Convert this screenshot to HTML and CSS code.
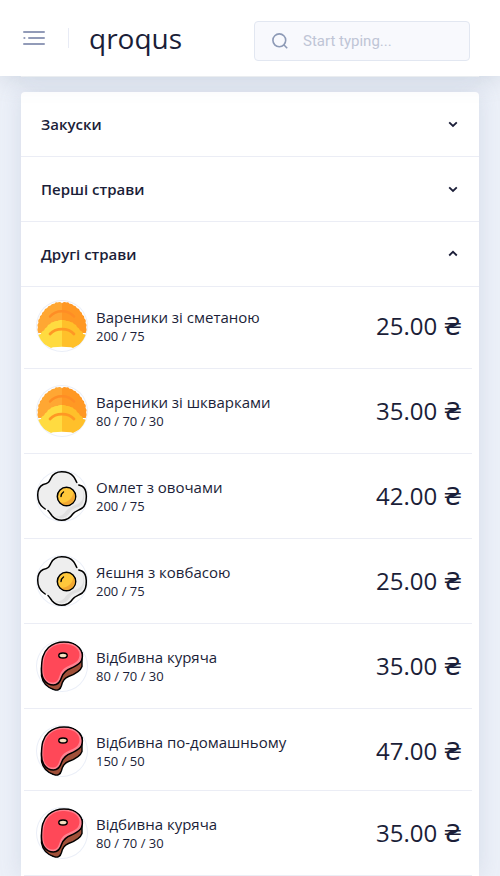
FILE: index.html
```
<!DOCTYPE html>
<html lang="uk">
<head>
<meta charset="utf-8">
<title>qroqus</title>
<link rel="stylesheet" href="styles.css">
</head>
<body>
<svg class="sprite" aria-hidden="true">
  <defs>
    <clipPath id="round"><circle cx="26" cy="26" r="25.300"/></clipPath>
  </defs>
  <symbol id="dumpling" viewBox="0 0 52 52">
    <g clip-path="url(#round)">
      <path fill="#ffa733" d="M26 3.200q-2-2-4.500-.8-2-.4-3 1.400-2.800-.4-4 1.700-2.700.3-3.300 2.600Q8.400 8.500 8 11.200q-2.500 1-2.300 3.600Q3.200 16 3.700 18.600 1.500 20 2.500 22.700.7 24.700 1.900 27.300.7 29.500 2.300 33H26z"/>
      <path fill="#ff9824" d="M26 3.200q2-2 4.500-.8 2-.4 3 1.400 2.800-.4 4 1.700 2.700.3 3.300 2.600 2.800.4 3.200 3.100 2.500 1 2.300 3.600 2.500 1.200 2 3.800 2.200 1.400 1.200 4.100 1.800 2 .6 4.600 1.200 2.200-.4 5.700H26z"/>
      <path fill="#ffdb40" d="M26 20q-3-.5-4.500 1-2.500-.5-4 1-2.500 0-3.500 2-2.500.5-3 3-2.500 1-3 3.500Q5 31.500 5 34q-3 0-3 2 2 7 13 12l2-.8 9-.5z"/>
      <path fill="#ffc02a" d="M26 20q3-.5 4.500 1 2.500-.5 4 1 2.500 0 3.500 2 2.500.5 3 3 2.500 1 3 3.500 3 1 3 3.500 3 0 3 2-2 7-13 12l-2-.8-9-.5z"/>
    </g>
    <path fill="none" stroke="#ff8d25" stroke-width="2.500" stroke-linecap="round" d="M14 16.500c6-7 18-7 24 0"/>
    <path fill="none" stroke="#ff9824" stroke-width="2.700" stroke-linecap="round" d="M14 34c6-6.500 18-6.500 24 0"/>
  </symbol>
  <symbol id="egg" viewBox="0 0 52 52">
    <path fill="#eee" d="M25.700 1.800C31 1.800 35 3.500 37.500 6.500c2 3 2.500 6.500 5.500 8.500 5 1.500 6.800 4 7.300 10.500.2 6-1 10-4 12.500-4 2.500-7 3-9.500 6-3 4.500-6 6.300-11.100 6.300-4 0-7-1.500-10-4.300-2-2.500-3-5-6.500-7.500C4 35 1.700 30 1.700 25c0-6 1.500-8.500 5.500-10.500C12.500 13.500 13 12 15 8c2-4 5-6.200 10.700-6.200z"/>
    <path fill="#dfdfdf" d="M46.500 18c2 8 1 13-5 16-8 3-10 5-13 9-3 3-6 4-9 3 5 4 11 2 14-3 2-4 5-5 9-6 6-2 7-13 4-19z"/>
    <path fill="none" stroke="#000" stroke-width="1.500" stroke-linecap="round" stroke-linejoin="round" d="M12 40.500c2 2 3 4 4.200 5.500 2.500 2.800 5.500 4.300 9.500 4.300 5.100 0 8.100-1.800 11.100-6.300 2.500-3 5.500-3.500 9.500-6 3-2.500 4.200-6.500 4-12.500-.2-5-1.500-8-4.500-9.500l-3-1M40.800 12.500C39.500 10 39 8.300 37.500 6.500 35 3.500 31 1.800 25.700 1.800 20 1.800 17 4 15 8c-2 4-2.500 5.500-7.800 6.500-4 2-5.500 4.500-5.500 10.500 0 5 2.300 10 5.500 12.500l2 1.500"/>
    <circle cx="30.500" cy="26.500" r="9.200" fill="#ffc83b" stroke="#000" stroke-width="1.500"/>
    <path fill="#f2a832" d="M37.500 22a8.400 8.400 0 0 1-13 10.500c7 1 12-4 13-10.500z"/>
    <path fill="none" stroke="#000" stroke-width="1.400" stroke-linecap="round" d="M25 26.500c0-2 1-3.500 2.500-4.500"/>
  </symbol>
  <symbol id="steak" viewBox="0 0 52 52">
    <path fill="#a05039" stroke="#000" stroke-width="1.400" d="M5.500 28v8c1 6 5 11 12 13.500 4 1.500 7 0 8-4 1-4.500 3-7.500 7-9 7-2.500 12-5.500 13.500-10V13z"/>
    <path fill="#ff8290" stroke="#000" stroke-width="1.500" d="M5.500 30c0-10 1-17 7-22.500C17 3.500 22 2 28 2c7 0 12 2 15 5.500 3.500 4 4 9 2.500 13-1.500 4-6 5.500-10 7.500-5.500 2-8.500 5-10 9.500-1.500 5-4 7.500-8 7.500C9.500 45 5.500 38 5.500 30z"/>
    <path fill="#ff4858" d="M7.300 30c0-9 1-16 6.500-21C18 5 23 4 28.500 4c6 .3 10 1.800 12.500 4.800 3 3.200 3 7.200 1.500 10.200-1.500 3.500-5 4.500-9 6.500-6 2.500-8.500 5.500-10 10.500-1.500 4.500-3 6.500-7 6.500-5.700 0-9.200-5-9.200-12.500z"/>
    <ellipse cx="27" cy="15.500" rx="4.200" ry="2.500" fill="#f5dfc0" stroke="#000" stroke-width="1.400"/>
  </symbol>
</svg>

<header class="topbar">
  <svg class="menu" viewBox="0 0 22 16" fill="none" stroke="#929bb8" stroke-width="2" stroke-linecap="round"><path d="M1 2h20M1.300 8h.2M6 8h15M1 14h20"/></svg>
  <span class="divider"></span>
  <span class="brand">qroqus</span>
  <label class="search">
    <svg class="search-icon" viewBox="0 0 18 18" fill="none" stroke="#8d9ab6" stroke-width="1.600"><circle cx="8.300" cy="8.300" r="6.400"/><path d="M12.800 12.800l3.400 3.400"/></svg>
    <input type="text" placeholder="Start typing...">
  </label>
</header>

<main class="page">
  <div class="card banner"></div>
  <div class="card menu-card">
    <h2 class="section">Закуски<svg class="chevron" viewBox="0 0 10 10"><path d="M1.200 3.300L5 7 8.800 3.300"/></svg></h2>
    <h2 class="section">Перші страви<svg class="chevron" viewBox="0 0 10 10"><path d="M1.200 3.300L5 7 8.800 3.300"/></svg></h2>
    <h2 class="section">Другі страви<svg class="chevron" viewBox="0 0 10 10"><path d="M1.200 6.500L5 2.800l3.800 3.700"/></svg></h2>
    <ul class="dishes">
      <li class="dish group-first"><svg class="avatar"><use href="#dumpling"/></svg><div class="info"><div class="name">Вареники зі сметаною</div><div class="weight">200 / 75</div></div><div class="price">25.00 ₴</div></li>
      <li class="dish"><svg class="avatar"><use href="#dumpling"/></svg><div class="info"><div class="name">Вареники зі шкварками</div><div class="weight">80 / 70 / 30</div></div><div class="price">35.00 ₴</div></li>
      <li class="dish"><svg class="avatar"><use href="#egg"/></svg><div class="info"><div class="name">Омлет з овочами</div><div class="weight">200 / 75</div></div><div class="price">42.00 ₴</div></li>
      <li class="dish"><svg class="avatar"><use href="#egg"/></svg><div class="info"><div class="name">Яєшня з ковбасою</div><div class="weight">200 / 75</div></div><div class="price">25.00 ₴</div></li>
      <li class="dish"><svg class="avatar"><use href="#steak"/></svg><div class="info"><div class="name">Відбивна куряча</div><div class="weight">80 / 70 / 30</div></div><div class="price">35.00 ₴</div></li>
      <li class="dish group-last"><svg class="avatar"><use href="#steak"/></svg><div class="info"><div class="name">Відбивна по-домашньому</div><div class="weight">150 / 50</div></div><div class="price">47.00 ₴</div></li>
      <li class="dish"><svg class="avatar"><use href="#steak"/></svg><div class="info"><div class="name">Відбивна куряча</div><div class="weight">80 / 70 / 30</div></div><div class="price">35.00 ₴</div></li>
    </ul>
  </div>
</main>
</body>
</html>
```
FILE: styles.css
```
* { box-sizing: border-box; }
html, body { height: 100%; }
body {
  margin: 0;
  display: flex;
  flex-direction: column;
  overflow: hidden;
  background: #ecf0f8;
  color: #1b1e38;
  font-family: "Open Sans", "DejaVu Sans", sans-serif;
}
.sprite { position: absolute; width: 0; height: 0; }
.topbar {
  position: relative;
  z-index: 1;
  flex: none;
  display: flex;
  align-items: center;
  height: 76px;
  padding: 0 30px 0 23px;
  background: #fff;
  box-shadow: 0 2px 22px rgba(110, 130, 155, .25);
}
.menu { width: 22px; height: 16px; }
.divider { width: 1px; height: 20px; margin: 0 20px 0 23px; background: #e8ebf5; }
.brand { font-size: 28px; line-height: 38px; }
.search {
  display: flex;
  align-items: center;
  width: 216px;
  height: 40px;
  margin: 6px 0 0 auto;
  padding-left: 16px;
  border: 1px solid #e2e7f1;
  border-radius: 4px;
  background: #f8f9fd;
}
.search-icon { width: 18px; height: 18px; margin-right: 14px; }
.search input {
  width: 150px;
  padding: 0;
  border: 0;
  background: none;
  font: 15px Roboto, sans-serif;
}
.search input::placeholder { color: #bfc5d6; }
.page { flex: 1; display: flex; flex-direction: column; min-height: 0; padding: 0 21px; }
.card { background: #fff; box-shadow: 0 0 21px rgba(130, 150, 180, .22); }
.banner { flex: none; height: 1px; margin-bottom: 15px; }
.menu-card { flex: 1; border-radius: 4px 4px 0 0; }
.section {
  display: flex;
  align-items: center;
  justify-content: space-between;
  height: 65px;
  margin: 0;
  padding: 0 21px 0 20px;
  border-bottom: 1px solid #ebedf5;
  font-size: 15px;
  font-weight: 600;
}
.chevron { width: 10px; height: 10px; fill: none; stroke: #1b1e38; stroke-width: 1.8; }
.dishes { margin: 0; padding: 0 7px 0 3px; list-style: none; }
.dish {
  display: flex;
  align-items: center;
  padding: 16px 10px 16px 12px;
  border-bottom: 1px solid #ebedf5;
}
.group-first { padding-top: 13px; }
.group-last { padding-bottom: 13px; }
.avatar {
  flex: none;
  width: 52px;
  height: 52px;
  margin-right: 8px;
  border-radius: 50%;
  box-shadow: inset 0 0 0 1px #ebeff8;
}
.name { font-size: 15px; line-height: 20px; }
.weight { font-size: 13px; line-height: 18px; }
.price { margin-left: auto; font-size: 24px; line-height: 34px; }
```
